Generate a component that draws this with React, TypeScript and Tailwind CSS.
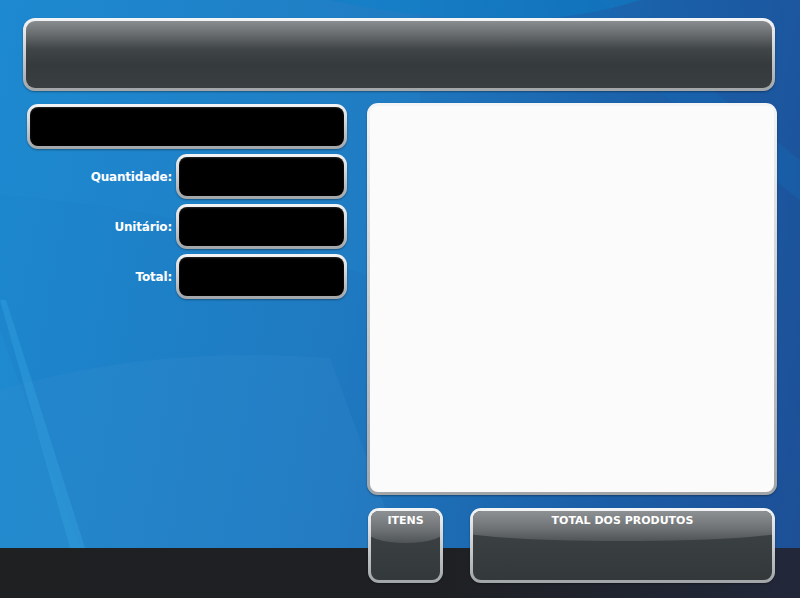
import React from "react";

const silver =
  "bg-[linear-gradient(180deg,#f4f5f6_0%,#d2d4d6_40%,#a2a5a8_100%)] shadow-[0_1px_2px_rgba(0,0,0,0.35)]";

function Field({ className = "" }: { className?: string }) {
  return (
    <div className={`${silver} rounded-[11px] p-[3px] ${className}`}>
      <div className="h-full w-full rounded-[8px] bg-black shadow-[inset_0_1px_2px_rgba(255,255,255,0.15)]" />
    </div>
  );
}

function GlossBox({
  className = "",
  label,
  split = "40%",
}: {
  className?: string;
  label?: string;
  split?: string;
}) {
  return (
    <div className={`${silver} rounded-[11px] p-[3px] ${className}`}>
      <div className="relative h-full w-full overflow-hidden rounded-[8px] bg-[linear-gradient(180deg,#3f4447_0%,#33383b_100%)]">
        <div
          className="absolute left-[-10%] right-[-10%] top-0 rounded-b-[50%_14px] bg-[linear-gradient(180deg,#8e9194_0%,#6d7174_60%,#4f5457_100%)]"
          style={{ height: split }}
        />
        {label && (
          <div className="relative pt-[3px] text-center font-['DejaVu_Sans',sans-serif] text-[11px] font-bold leading-[14px] text-white">
            {label}
          </div>
        )}
      </div>
    </div>
  );
}

function Row({ label }: { label: string }) {
  return (
    <div className="mt-[5px] flex items-center justify-end gap-[4px]">
      <span className="font-['DejaVu_Sans',sans-serif] text-[12px] font-bold tracking-[-0.2px] text-white">{label}</span>
      <Field className="h-[45px] w-[171px]" />
    </div>
  );
}

export default function App() {
  return (
    <div className="relative h-[598px] w-[800px] overflow-hidden bg-[linear-gradient(100deg,#1c88cf_0%,#1f79c0_45%,#1a5fa8_75%,#1d4f96_100%)]">
      {/* background swooshes */}
      <svg className="absolute inset-0" width="800" height="598" viewBox="0 0 800 598">
        <path d="M0 195 Q 250 215 420 300 L 420 0 L 0 0 Z" fill="#2a95d8" opacity="0.15" />
        <path d="M0 390 Q 150 345 330 358 L 400 548 L 0 548 Z" fill="#3a8fd0" opacity="0.2" />
        <path d="M0 300 L 6 300 L 85 548 L 70 548 Z" fill="#3aaee9" opacity="0.3" />
        <path d="M0 330 L 80 548 L 0 548 Z" fill="#2d9ee0" opacity="0.15" />
        <path d="M540 0 L 600 0 L 800 160 L 800 200 Z" fill="#1668b3" opacity="0.4" />
        <path d="M330 0 Q 520 40 640 0 Z" fill="#0b80c8" opacity="0.5" />
      </svg>
      <div className="absolute bottom-0 left-0 right-0 h-[50px] bg-[linear-gradient(90deg,#1e2022_0%,#1e2023_55%,#22283a_100%)]" />

      <div className="relative flex flex-col pl-[23px] pt-[18px]">
        <div className={`${silver} h-[73px] w-[752px] rounded-[12px] p-[3px]`}>
          <div className="h-full w-full rounded-[9px] bg-[linear-gradient(180deg,#8a8d90_0%,#6b6f72_18%,#404548_42%,#353a3d_65%,#393e41_100%)]" />
        </div>

        <div className="mt-[12px] flex">
          <div className="ml-[4px] mt-[1px] flex w-[320px] flex-col">
            <Field className="h-[45px] w-[320px]" />
            <Row label="Quantidade:" />
            <Row label="Unitário:" />
            <Row label="Total:" />
          </div>

          <div className="ml-[20px] flex flex-col">
            <div className={`${silver} h-[392px] w-[410px] rounded-[11px] p-[3px]`}>
              <div className="h-full w-full rounded-[8px] bg-[#fbfbfb]" />
            </div>
            <div className="mt-[13px] flex">
              <GlossBox className="ml-[1px] h-[75px] w-[75px]" label="ITENS" split="46%" />
              <GlossBox className="ml-[27px] h-[75px] w-[305px]" label="TOTAL DOS PRODUTOS" split="44%" />
            </div>
          </div>
        </div>
      </div>
    </div>
  );
}
